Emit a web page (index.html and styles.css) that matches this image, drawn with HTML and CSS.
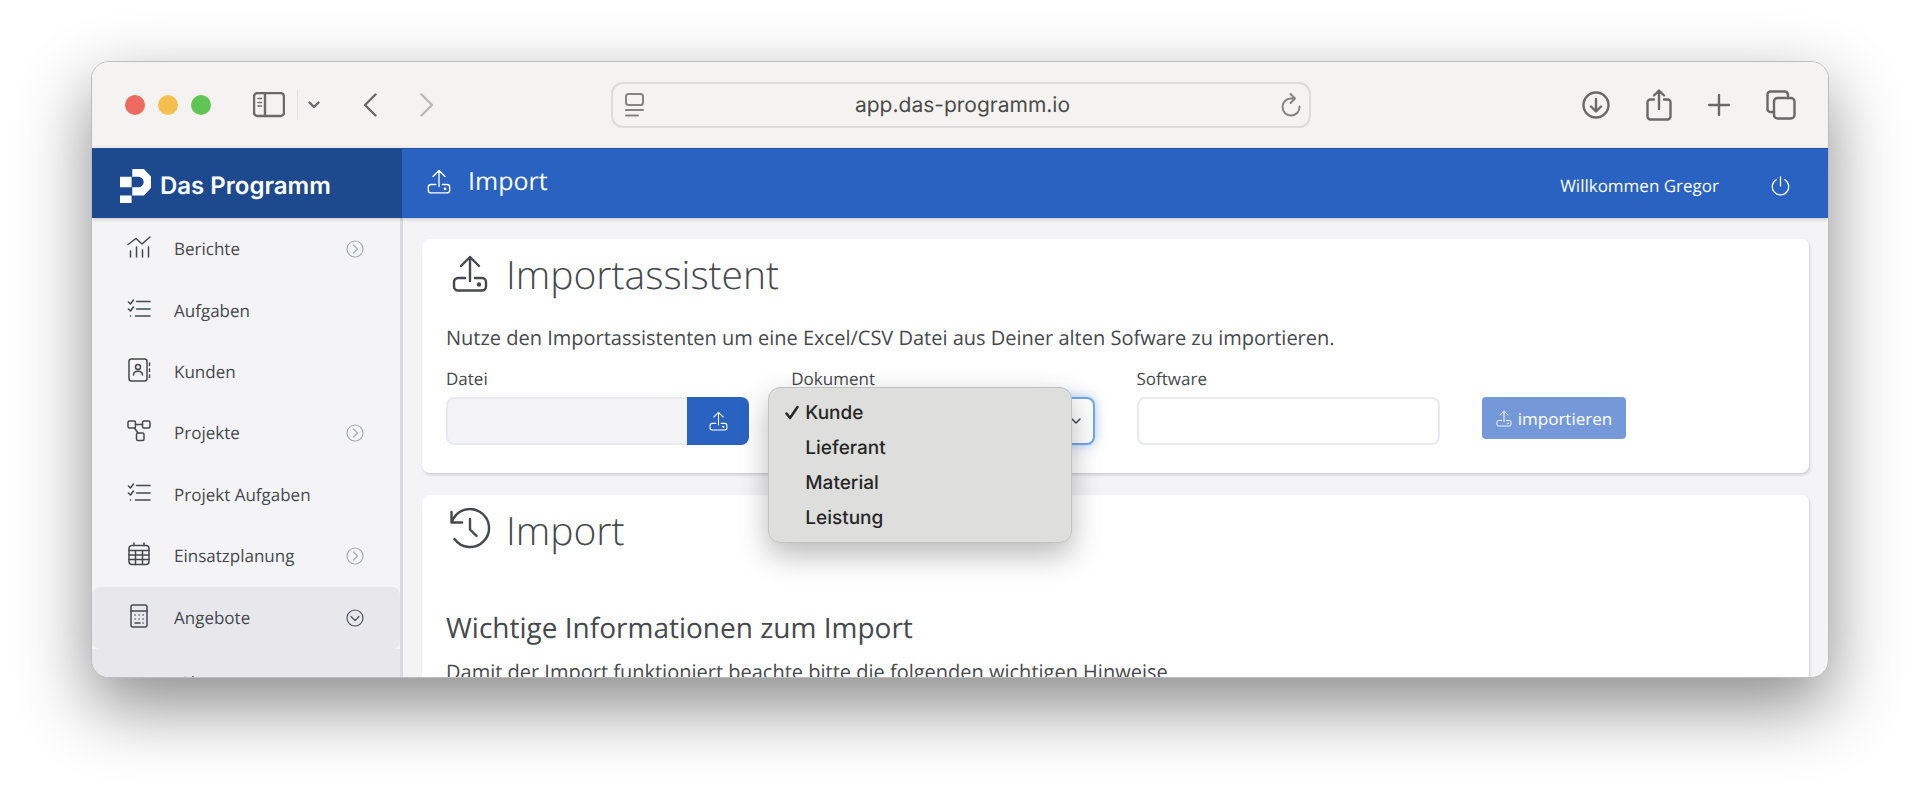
FILE: index.html
```html
<!DOCTYPE html>
<html lang="de">
<head>
	<meta charset="UTF-8">
	<title>Import - Das Programm</title>
	<link rel="stylesheet" href="styles.css">
</head>
<body>
	<svg class="sprite" aria-hidden="true">
		<symbol id="upload" viewBox="0 0 36 37">
			<path d="M13 23H6a4 4 0 0 0-4 4v4.500a4 4 0 0 0 4 4h24a4 4 0 0 0 4-4V27a4 4 0 0 0-4-4h-7M18 26V2M9 11l9-9 9 9"/>
			<circle class="fill" cx="27" cy="29.500" r="1"/>
		</symbol>
		<symbol id="tasks" viewBox="0 0 24 24">
			<path d="M1.500 5l2 2 3-4M1.500 12l2 2 3-4M9.500 4.500H23M9.500 12H23M8.500 19H23M3.500 19h.1"/>
		</symbol>
		<symbol id="more" viewBox="0 0 18 18">
			<circle cx="9" cy="9" r="8"/>
			<path d="M7.500 5l4 4-4 4"/>
		</symbol>
	</svg>
	<div class="window">
		<div class="toolbar">
			<div class="tools-left">
				<div class="lights">
					<span class="light red"></span>
					<span class="light yellow"></span>
					<span class="light green"></span>
				</div>
				<button class="tool sidebar-btn" aria-label="Seitenleiste">
					<svg width="32" height="26" viewBox="0 0 32 26"><rect x="1" y="1" width="30" height="23" rx="3.500"/><path d="M12 1v23"/><path class="thin" d="M5 6.500h3.500M5 10.500h3.500M5 14h3.500"/></svg>
				</button>
				<span class="divider"></span>
				<button class="tool" aria-label="Tabgruppen">
					<svg width="12" height="8" viewBox="0 0 12 8"><path d="M1.500 1.500L6 6l4.500-4.500"/></svg>
				</button>
				<button class="tool back" aria-label="Zurück">
					<svg width="14" height="24" viewBox="0 0 14 24"><path d="M12.500 1.500L2 12l10.500 10.500"/></svg>
				</button>
				<button class="tool forward" aria-label="Vorwärts" disabled>
					<svg width="14" height="24" viewBox="0 0 14 24"><path d="M1.500 1.500L12 12 1.500 22.500"/></svg>
				</button>
			</div>
			<div class="address">
				<svg width="20" height="24" viewBox="0 0 20 24"><rect x="1" y="1" width="17" height="11" rx="2.500"/><path d="M1 17h17M1 22.500h12"/></svg>
				<span class="url">app.das-programm.io</span>
				<svg width="20" height="24" viewBox="0 0 20 24"><path d="M18.500 13.500A8.500 8.500 0 1 1 10 5.500h4M9.500 1l4.500 4.500L9.500 10"/></svg>
			</div>
			<div class="tools-right">
				<button class="tool" aria-label="Downloads">
					<svg width="28" height="28" viewBox="0 0 28 28"><circle cx="14" cy="14" r="12.500"/><path d="M14 8v12M9 15.500l5 5 5-5"/></svg>
				</button>
				<button class="tool" aria-label="Teilen">
					<svg width="26" height="32" viewBox="0 0 26 32"><path d="M8 10.500H4.500A3 3 0 0 0 1.500 14v13.500A3 3 0 0 0 4.500 30.500h17a3 3 0 0 0 3-3V14a3 3 0 0 0-3-3.500H18M13 20V2M8 6.500L13 1.500l5 5"/></svg>
				</button>
				<button class="tool" aria-label="Neuer Tab">
					<svg width="22" height="22" viewBox="0 0 22 22"><path d="M11 1v20M1 11h20"/></svg>
				</button>
				<button class="tool" aria-label="Tabs">
					<svg width="30" height="30" viewBox="0 0 30 30"><rect x="8" y="8" width="20.500" height="20.500" rx="3.500"/><path d="M8 22H4.500A3 3 0 0 1 1.500 18.500v-14A3 3 0 0 1 4.500 1.500h14A3.500 3.500 0 0 1 22 4.500V8"/></svg>
				</button>
			</div>
		</div>
		<header class="header">
			<a class="brand" href="#">
				<svg width="31" height="34" viewBox="0 0 91 100"><path d="M0 23h34v31H0zM0 78h34v22H0zM36 0h34l21 22v34L70 78H36V54h18a15.500 15.500 0 0 0 0-31H36z"/></svg>
				Das Programm
			</a>
			<div class="page-name">
				<svg class="icon" width="24" height="25"><use href="#upload"/></svg>
				Import
			</div>
			<div class="user">
				<span>Willkommen Gregor</span>
				<button class="logout" aria-label="Abmelden">
					<svg width="19" height="20" viewBox="0 0 19 20"><path d="M5.500 3.500a8.200 8.200 0 1 0 8 0M9.500 1v9"/></svg>
				</button>
			</div>
		</header>
		<div class="body">
			<nav class="sidebar">
				<a class="item parent" href="#">
					<svg class="icon" width="24" height="24" viewBox="0 0 24 24"><path d="M1 9.500l8-6 6 5.500 8-7M3.500 16v6M9.500 12v10M15.500 15v7M21.500 12v10"/></svg>
					<span>Berichte</span>
					<svg class="more" width="18" height="18"><use href="#more"/></svg>
				</a>
				<a class="item" href="#">
					<svg class="icon" width="24" height="24"><use href="#tasks"/></svg>
					<span>Aufgaben</span>
				</a>
				<a class="item" href="#">
					<svg class="icon" width="24" height="24" viewBox="0 0 24 24"><rect x="2" y="1" width="18" height="22" rx="2.500"/><circle cx="11" cy="9" r="2.500"/><path d="M6.500 17c0-5 9-5 9 0M22.500 5v2.500M22.500 11v2.500M22.500 17v2.500"/></svg>
					<span>Kunden</span>
				</a>
				<a class="item parent" href="#">
					<svg class="icon" width="24" height="24" viewBox="0 0 24 24"><rect x="1" y="2" width="7.500" height="7" rx="1.500"/><rect x="15.500" y="2" width="7.500" height="7" rx="1.500"/><rect x="9.500" y="14" width="7.500" height="7.500" rx="1.500"/><path d="M8.500 5.500h7M7.500 9l3.500 5"/></svg>
					<span>Projekte</span>
					<svg class="more" width="18" height="18"><use href="#more"/></svg>
				</a>
				<a class="item" href="#">
					<svg class="icon" width="24" height="24"><use href="#tasks"/></svg>
					<span>Projekt Aufgaben</span>
				</a>
				<a class="item parent" href="#">
					<svg class="icon" width="24" height="24" viewBox="0 0 24 24"><rect x="2" y="3.500" width="20" height="19" rx="3"/><path d="M2 8.500h20M2 13h20M2 17.500h20M8.500 8.500v14M15.500 8.500v14M7 1v2.500M17 1v2.500"/></svg>
					<span>Einsatzplanung</span>
					<svg class="more" width="18" height="18"><use href="#more"/></svg>
				</a>
				<a class="item parent open" href="#">
					<svg class="icon" width="24" height="24" viewBox="0 0 24 24"><rect x="4" y="1" width="16" height="22" rx="2"/><path d="M4 7h16M8 11h.1M12 11h.1M16 11h.1M8 15h.1M12 15h.1M16 15h.1M8 19h5M16 19h.1"/></svg>
					<span>Angebote</span>
					<svg class="more" width="18" height="18" viewBox="0 0 18 18"><circle cx="9" cy="9" r="8"/><path d="M5 7.500l4 4 4-4"/></svg>
				</a>
				<div class="submenu">
					<a href="#">Abonnements</a>
				</div>
			</nav>
			<main class="content">
				<section class="card">
					<h1><svg class="icon" width="42" height="37"><use href="#upload"/></svg>Importassistent</h1>
					<p>Nutze den Importassistenten um eine Excel/CSV Datei aus Deiner alten Sofware zu importieren.</p>
					<form class="form">
						<div class="field">
							<label for="datei">Datei</label>
							<div class="file">
								<input type="text" id="datei" readonly>
								<button type="button" aria-label="Datei wählen"><svg class="icon" width="19" height="20"><use href="#upload"/></svg></button>
							</div>
						</div>
						<div class="field">
							<label for="dokument">Dokument</label>
							<div class="select">
								<select id="dokument">
									<option selected>Kunde</option>
									<option>Lieferant</option>
									<option>Material</option>
									<option>Leistung</option>
								</select>
								<svg class="arrow" width="10" height="6" viewBox="0 0 10 6"><path d="M1 1l4 4 4-4"/></svg>
							</div>
							<ul class="menu">
								<li><svg class="check" width="14" height="15" viewBox="0 0 14 15"><path d="M1.500 8.500l3.500 4.500 7.500-11"/></svg>Kunde</li>
								<li>Lieferant</li>
								<li>Material</li>
								<li>Leistung</li>
							</ul>
						</div>
						<div class="field">
							<label for="software">Software</label>
							<input type="text" id="software">
						</div>
						<div class="field action">
							<button type="submit" class="submit"><svg class="icon" width="16" height="17"><use href="#upload"/></svg>importieren</button>
						</div>
					</form>
				</section>
				<section class="card">
					<h1><svg class="icon" width="42" height="42" viewBox="0 0 42 42"><path d="M2.500 4v10.500H13M3 14A19 19 0 1 1 5.500 31M21 11v10.500l6.500 6.500"/></svg>Import</h1>
					<h2>Wichtige Informationen zum Import</h2>
					<p>Damit der Import funktioniert beachte bitte die folgenden wichtigen Hinweise</p>
				</section>
			</main>
		</div>
	</div>
</body>
</html>
```
FILE: styles.css
```css
*{
	box-sizing:border-box;
	margin:0;
	padding:0;
}
body{
	height:100vh;
	padding:61px 91px 122px;
	display:flex;
	background:#fff;
	color:#45494d;
	font-family:"Open Sans", sans-serif;
	font-size:17px;
	text-rendering:geometricPrecision;
	overflow:hidden;
}
a{
	color:inherit;
	text-decoration:none;
}
button{
	border:0;
	background:none;
	font:inherit;
	color:inherit;
}
svg{
	display:block;
	flex:none;
	fill:none;
	stroke:currentColor;
	stroke-linecap:round;
	stroke-linejoin:round;
}
.sprite{
	position:absolute;
	width:0;
	height:0;
}
.fill{
	fill:currentColor;
}
.window{
	flex:1;
	min-width:0;
	display:flex;
	flex-direction:column;
	overflow:hidden;
	border:1px solid #bdbdbd;
	border-radius:18px;
	background:#f4f4f7;
	box-shadow:0 28px 70px rgba(0,0,0,0.46);
}

/* browser bar */
.toolbar{
	flex:none;
	height:86px;
	padding:0 32px 0 33px;
	display:grid;
	grid-template-columns:1fr minmax(0,700px) 1fr;
	align-items:center;
	background:#f4f3f1;
	color:#6b6966;
}
.toolbar svg{
	stroke-width:2.4;
}
.toolbar .thin{
	stroke-width:1.5;
}
.tools-left, .tools-right, .lights{
	display:flex;
	align-items:center;
}
.tools-right{
	justify-content:flex-end;
	gap:36px;
}
.lights{
	gap:13px;
	margin-right:42px;
}
.light{
	width:20px;
	height:20px;
	border-radius:50%;
}
.red{
	background:#ec6a5e;
}
.yellow{
	background:#f4bf4f;
}
.green{
	background:#61c554;
}
.divider{
	width:1px;
	height:30px;
	margin:0 10px 0 12px;
	background:#e2e1df;
}
.back, .forward{
	margin-left:43px;
}
.forward{
	color:#b9b8b6;
}
.address{
	height:46px;
	padding:0 8px 0 12px;
	display:flex;
	align-items:center;
	border:2px solid #dddcda;
	border-radius:12px;
	color:#858481;
}
.address svg{
	stroke-width:2;
}
.url{
	flex:1;
	text-align:center;
	font-family:Inter, sans-serif;
	font-size:21px;
	color:#4c4b4a;
}

/* app header */
.header{
	flex:none;
	height:70px;
	display:flex;
	align-items:center;
	border-top:1px solid #2455a5;
	background:#2962c1;
	color:#fff;
	box-shadow:0 1px 4px rgba(0,0,0,0.2);
	position:relative;
}
.brand{
	width:310px;
	height:100%;
	padding-left:28px;
	padding-top:4px;
	display:flex;
	align-items:center;
	gap:9px;
	background:#1d4a8e;
	font-family:Inter, sans-serif;
	font-size:24px;
	font-weight:600;
}
.brand svg{
	fill:#fff;
	stroke:none;
}
.page-name{
	flex:1;
	padding:0 0 5px 25px;
	display:flex;
	align-items:center;
	gap:17px;
	font-size:25px;
}
.user{
	padding:4px 38px 0 0;
	display:flex;
	align-items:center;
	gap:52px;
}
.logout{
	stroke-width:1.3;
}
.icon{
	stroke-width:2;
}

.body{
	flex:1;
	min-height:0;
	display:flex;
}
.sidebar{
	width:311px;
	flex:none;
	border-right:3px solid #dadae1;
}
.item{
	height:61px;
	padding:0 36px 1px 35px;
	display:flex;
	align-items:center;
	border-radius:8px;
}
.item .icon{
	margin-bottom:3px;
	stroke-width:1.5;
}
.parent{
	height:62px;
}
.item span{
	flex:1;
	padding-left:23px;
}
.more{
	color:#a6a8b3;
	stroke-width:1.2;
}
.open{
	background:#e7e7ec;
}
.open .more{
	color:#505358;
}
.submenu{
	height:200px;
	padding:22px 0 0 88px;
	background:#e7e7ec;
}

.content{
	flex:1;
	min-width:0;
	padding:21px 19px 0 19px;
}
.card{
	margin-bottom:22px;
	padding:7px 24px 28px;
	border-radius:8px;
	background:#fff;
	box-shadow:1px 2px 3px rgba(0,0,0,0.15);
}
h1{
	height:56px;
	display:flex;
	align-items:center;
	gap:15px;
	padding-left:3px;
	font-size:39px;
	font-weight:300;
}
h1 .icon{
	margin-bottom:2px;
	stroke-width:2.4;
}
h2{
	margin:50px 0 9px;
	font-size:28px;
	font-weight:400;
	line-height:40px;
}
p{
	font-size:20px;
	line-height:30px;
}
h1 + p{
	margin-top:21px;
}
.form{
	margin-top:14px;
	display:grid;
	grid-template-columns:repeat(4, 1fr);
	gap:42px;
}
.field{
	position:relative;
}
label{
	display:block;
	height:30px;
	line-height:24px;
}
input, select{
	display:block;
	width:100%;
	height:48px;
	padding:0 12px;
	border:2px solid #e8eaee;
	border-radius:8px;
	background:#fff;
	font:inherit;
	color:inherit;
	outline:none;
}
.file{
	display:flex;
}
.file input{
	flex:1;
	min-width:0;
	border-right:0;
	border-radius:8px 0 0 8px;
	background:#f4f4f7;
}
.file button{
	width:62px;
	display:flex;
	align-items:center;
	justify-content:center;
	border-radius:0 8px 8px 0;
	background:#2962c1;
	color:#fff;
}
.select{
	position:relative;
}
select{
	appearance:none;
	border-color:#6fa8ee;
	box-shadow:0 0 12px rgba(80,150,240,0.5);
}
.arrow{
	position:absolute;
	right:14px;
	top:21px;
	stroke-width:1.5;
}
.menu{
	position:absolute;
	z-index:2;
	left:-23px;
	top:20px;
	width:100%;
	padding:7px 0;
	list-style:none;
	border:1px solid #c2c2c1;
	border-radius:12px;
	background:#dededc;
	box-shadow:0 12px 30px rgba(0,0,0,0.28);
	color:#262626;
	font-family:Inter, sans-serif;
	font-size:19px;
	font-weight:500;
}
.menu li{
	position:relative;
	height:35px;
	padding-left:36px;
	line-height:35px;
}
.check{
	position:absolute;
	left:16px;
	top:10px;
	stroke-width:2.5;
}
.action{
	padding-top:30px;
}
.submit{
	height:42px;
	padding:0 14px;
	display:flex;
	align-items:center;
	gap:6px;
	border-radius:4px;
	background:#7599d8;
	color:#fff;
}
```
